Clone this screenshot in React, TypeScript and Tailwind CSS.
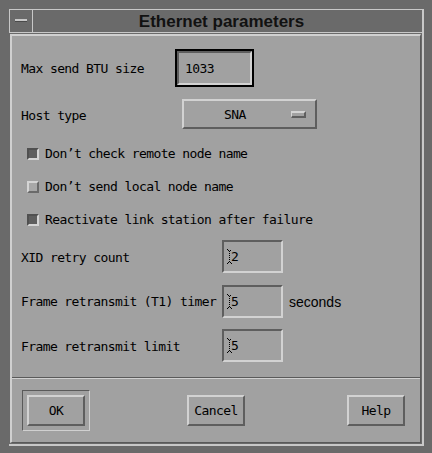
import React from "react";

const mono = "font-['DejaVu_Sans_Mono',monospace] text-[13px] tracking-[-0.6px] text-black leading-none";

const sunken = "border-2 border-t-[#5e5e5e] border-l-[#5e5e5e] border-b-[#d2d2d2] border-r-[#d2d2d2]";
const raised = "border-2 border-t-[#d2d2d2] border-l-[#d2d2d2] border-b-[#5e5e5e] border-r-[#5e5e5e]";

function Caret() {
  return (
    <svg width="5" height="16" viewBox="0 0 5 16" className="absolute left-[3px] top-[7px]" shapeRendering="crispEdges">
      <rect x="0" y="0" width="1" height="1" fill="#000" />
      <rect x="1" y="1" width="1" height="1" fill="#000" />
      <rect x="3" y="1" width="1" height="1" fill="#000" />
      <rect x="2" y="2" width="1" height="1" fill="#000" />
      <rect x="2" y="4" width="1" height="1" fill="#000" />
      <rect x="2" y="6" width="1" height="1" fill="#000" />
      <rect x="2" y="8" width="1" height="1" fill="#000" />
      <rect x="2" y="10" width="1" height="1" fill="#000" />
      <rect x="2" y="12" width="1" height="1" fill="#000" />
      <rect x="1" y="13" width="1" height="1" fill="#000" />
      <rect x="3" y="13" width="1" height="1" fill="#000" />
      <rect x="0" y="14" width="1" height="1" fill="#000" />
      <rect x="4" y="14" width="1" height="1" fill="#000" />
    </svg>
  );
}

function NumField({ value }: { value: string }) {
  return (
    <div className={`relative w-[61px] h-[33px] ${sunken} flex items-center pl-[7px] bg-[#a1a1a1]`}>
      <Caret />
      <span className={mono}>{value}</span>
    </div>
  );
}

function Check({ checked, label }: { checked: boolean; label: string }) {
  return (
    <div className="h-[33px] flex items-center pl-[15px]">
      {checked ? (
        <div className="w-[12px] h-[12px] border-2 border-t-[#505050] border-l-[#505050] border-b-[#d4d4d4] border-r-[#d4d4d4] bg-[#5e5e5e]" />
      ) : (
        <div className="w-[12px] h-[12px] border-2 border-t-[#d4d4d4] border-l-[#d4d4d4] border-b-[#6a6a6a] border-r-[#6a6a6a] bg-[#a8a8a8]" />
      )}
      <span className={`${mono} ml-[6px]`}>{label}</span>
    </div>
  );
}

function Button({ label }: { label: string }) {
  return (
    <div className={`w-[58px] h-[31px] ${raised} bg-[#a1a1a1] flex items-center justify-center`}>
      <span className={mono}>{label}</span>
    </div>
  );
}

export default function App() {
  return (
    <div className="w-[432px] h-[453px] bg-[#6a6a6a] pt-[9px] pl-[9px] pr-[8px] pb-[7px] flex flex-col">
      <div className="flex-1 flex flex-col border-r-2 border-b-2 border-[#c8c8c8]">
        {/* title bar */}
        <div className="h-[23px] flex">
          <div className="w-[23px] h-full border-t border-l border-[#c8c8c8] flex items-center justify-center">
            <div className="w-[12px] h-[3px] bg-[#c8c8c8] border-b border-[#4a4a4a] mt-[-2px]" />
          </div>
          <div className="flex-1 h-full border-t border-l border-[#c8c8c8] flex items-center justify-center">
            <span className="font-['Liberation_Sans',Arial,sans-serif] font-bold text-[17px] text-[#111] leading-none pr-[12px]">
              Ethernet parameters
            </span>
          </div>
        </div>
        <div className="h-[1px] bg-[#c8c8c8]" />
        <div className="h-[1px]" />
        {/* content */}
        <div className="flex-1 ml-[1px] mr-[1px] mb-[1px] bg-[#a1a1a1] border-t-2 border-l-2 border-t-[#d0d0d0] border-l-[#d0d0d0] border-r border-b border-r-[#5a5a5a] border-b-[#5a5a5a] flex flex-col">
          <div className="mt-[13px] h-[38px] flex items-center pl-[9px]">
            <span className={`${mono} w-[154px]`}>Max send BTU size</span>
            <div className="w-[79px] h-[38px] border-2 border-black">
              <div className={`w-full h-full ${sunken} flex items-center pl-[6px]`}>
                <span className={mono}>1033</span>
              </div>
            </div>
          </div>
          <div className="mt-[12px] h-[30px] flex items-center pl-[9px]">
            <span className={`${mono} w-[161px] pt-[3px]`}>Host type</span>
            <div className={`w-[135px] h-[30px] ${raised} flex items-center pl-[40px] relative`}>
              <span className={mono}>SNA</span>
              <div className="absolute right-[9px] top-[10px] w-[15px] h-[7px] border-t-2 border-l border-t-[#d4d4d4] border-l-[#d4d4d4] border-b-2 border-r-2 border-b-[#5e5e5e] border-r-[#5e5e5e] bg-[#a1a1a1]" />
            </div>
          </div>
          <div className="mt-[8px] flex flex-col">
            <Check checked label="Don’t check remote node name" />
            <Check checked={false} label="Don’t send local node name" />
            <Check checked label="Reactivate link station after failure" />
          </div>
          <div className="mt-[4px] h-[33px] flex items-center pl-[9px]">
            <span className={`${mono} w-[201px] pt-[2px]`}>XID retry count</span>
            <NumField value="2" />
          </div>
          <div className="mt-[12px] h-[33px] flex items-center pl-[9px]">
            <span className={`${mono} w-[201px]`}>Frame retransmit (T1) timer</span>
            <NumField value="5" />
            <span className="ml-[6px] font-['Liberation_Sans',Arial,sans-serif] text-[14px] text-black leading-none">seconds</span>
          </div>
          <div className="mt-[11px] h-[33px] flex items-center pl-[9px]">
            <span className={`${mono} w-[201px] pt-[2px]`}>Frame retransmit limit</span>
            <NumField value="5" />
          </div>
          <div className="mt-[15px] h-[1px] bg-[#5a5a5a]" />
          <div className="h-[1px] bg-[#d0d0d0]" />
          <div className="mt-[11px] flex justify-between pl-[10px] pr-[10px]">
            <div className="w-[68px] h-[41px] border border-t-[#5a5a5a] border-l-[#5a5a5a] border-b-[#d0d0d0] border-r-[#d0d0d0] flex items-center justify-center">
              <Button label="OK" />
            </div>
            <div className="w-[68px] h-[41px] flex items-center justify-center">
              <Button label="Cancel" />
            </div>
            <div className="w-[68px] h-[41px] flex items-center justify-center">
              <Button label="Help" />
            </div>
          </div>
        </div>
      </div>
    </div>
  );
}
